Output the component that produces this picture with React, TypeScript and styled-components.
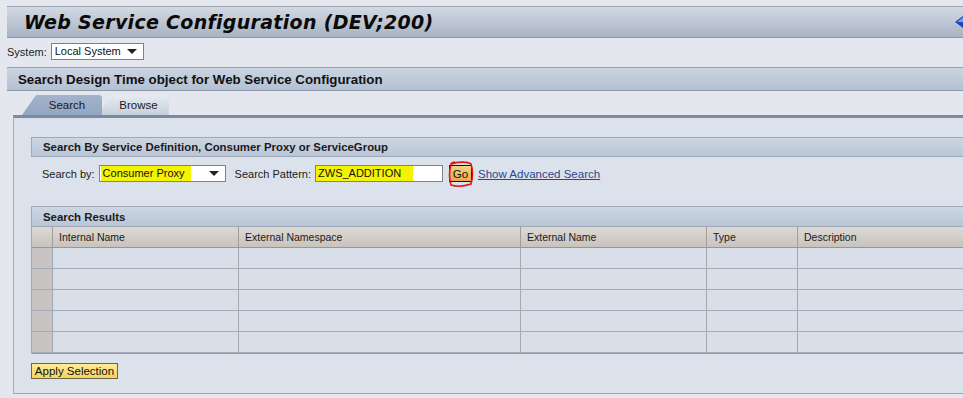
import * as React from 'react';
import styled, { createGlobalStyle } from 'styled-components';

const GlobalStyle = createGlobalStyle`
  html, body {
    margin: 0;
    padding: 0;
    background: #e4e8ee;
    overflow: hidden;
  }
  body {
    font-family: "Liberation Sans", Arial, sans-serif;
    font-size: 11px;
    color: #111;
  }
`;

const Page = styled.div`
  width: 963px;
  height: 398px;
  overflow: hidden;
  padding: 6px 0 0 7px;
  box-sizing: border-box;
`;

const TitleBar = styled.div`
  height: 32px;
  box-sizing: border-box;
  border-top: 1px solid #98a2b0;
  border-bottom: 1px solid #8f99a8;
  background: linear-gradient(#d3d9e3, #bcc5d2 55%, #a7b2c2);
  display: flex;
  align-items: center;
  justify-content: space-between;
  padding-left: 17px;
`;

const Title = styled.h1`
  margin: 0;
  font-family: "DejaVu Sans", Verdana, sans-serif;
  font-weight: bold;
  font-style: italic;
  font-size: 19px;
  letter-spacing: 0.3px;
  color: #0a0a0a;
`;

const BackArrow = styled.svg`
  width: 10px;
  height: 12px;
  margin-right: -2px;
`;

const FieldRow = styled.div<{ $indent?: number }>`
  display: flex;
  align-items: center;
  gap: 4px;
  padding-left: ${p => p.$indent ?? 0}px;
`;

const SystemRow = styled(FieldRow)`
  margin: 5px 0 7px;
  height: 17px;
`;

const Label = styled.span<{ $gapBefore?: number }>`
  font-size: 11px;
  color: #1a1a1a;
  white-space: nowrap;
  margin-left: ${p => p.$gapBefore ?? 0}px;
`;

const SelectBox = styled.div<{ $width: number }>`
  width: ${p => p.$width}px;
  height: 17px;
  box-sizing: border-box;
  background: #fff;
  border: 1px solid #7c828c;
  display: flex;
  align-items: center;
  justify-content: space-between;
  padding: 0 6px 0 1px;
  font-size: 11px;
`;

const Highlight = styled.span<{ $width?: number; $on?: boolean }>`
  display: inline-block;
  width: ${p => (p.$width ? `${p.$width}px` : 'auto')};
  background: ${p => (p.$on ? '#f4f400' : 'transparent')};
  padding-left: 2px;
  line-height: 15px;
  white-space: nowrap;
`;

const Caret = styled.span`
  width: 0;
  height: 0;
  border-left: 5px solid transparent;
  border-right: 5px solid transparent;
  border-top: 5px solid #222;
`;

const SectionHeader = styled.div`
  height: 24px;
  box-sizing: border-box;
  border-top: 1px solid #96a0ae;
  border-bottom: 1px solid #8e98a8;
  background: linear-gradient(#cbd4e0, #b4c1d3);
  display: flex;
  align-items: center;
  padding-left: 11px;
  font-size: 13.3px;
  font-weight: bold;
  color: #111;
`;

const TabStrip = styled.div`
  display: flex;
  margin: 4px 0 0 6px;
  padding-left: 9px;
  height: 20px;
`;

const Tab = styled.div<{ $active?: boolean; $width: number }>`
  width: ${p => p.$width}px;
  height: 20px;
  box-sizing: border-box;
  padding-left: 10px;
  margin-right: -4px;
  display: flex;
  align-items: center;
  justify-content: center;
  font-size: 11.5px;
  color: #1a1a1a;
  clip-path: polygon(14px 0, calc(100% - 2px) 0, 100% 2px, 100% 100%, 0 100%);
  background: ${p =>
    p.$active
      ? 'linear-gradient(#a3b3cb, #93a5c0)'
      : 'linear-gradient(#e6ebf1, #c6d0dd)'};
  z-index: ${p => (p.$active ? 2 : 1)};
`;

const Panel = styled.div`
  margin-left: 6px;
  border-top: 3px solid #7b8aa3;
  border-left: 1px solid #a4adba;
  border-bottom: 1px solid #9aa4b2;
  background: #dce2eb;
  height: 279px;
  box-sizing: border-box;
  padding: 19px 0 0 17px;
`;

const Group = styled.div`
  border-left: 1px solid #a1aab6;
`;

const GroupHeader = styled.div<{ $height: number }>`
  height: ${p => p.$height}px;
  box-sizing: border-box;
  border-top: 1px solid #a0a9b6;
  border-bottom: 1px solid #9ea8b6;
  background: linear-gradient(#cdd6e2, #b9c6d8);
  display: flex;
  align-items: center;
  padding-left: 11px;
  font-weight: bold;
  font-size: 11.4px;
  color: #1a1a1a;
`;

const SearchRow = styled(FieldRow)`
  margin: 8px 0 24px;
  height: 17px;
`;

const TextInput = styled.div`
  width: 128px;
  height: 17px;
  box-sizing: border-box;
  background: #fff;
  border: 1px solid #7c828c;
  display: flex;
  align-items: center;
  font-size: 11px;
`;

const GoWrap = styled.div`
  position: relative;
  margin-left: 2px;
`;

const GoButton = styled.button`
  width: 23px;
  height: 17px;
  padding: 0;
  box-sizing: border-box;
  border: 1px solid #111;
  background: linear-gradient(#f8d27e, #eba84a);
  font-family: "Liberation Sans", Arial, sans-serif;
  font-size: 11.5px;
  color: #111;
`;

const RedMark = styled.svg`
  position: absolute;
  left: -4px;
  top: -5px;
  width: 30px;
  height: 28px;
  pointer-events: none;
`;

const Link = styled.a`
  margin-left: 2px;
  color: #2a4790;
  text-decoration: underline;
  font-size: 11.5px;
  cursor: pointer;
`;

const Table = styled.div`
  display: grid;
  grid-template-columns: 20px 186px 282px 186px 91px 200px;
  border-bottom: 1px solid #949eab;
`;

const HeadCell = styled.div`
  height: 21px;
  box-sizing: border-box;
  background: linear-gradient(#ddd9d5, #c9c3bd);
  border-left: 1px solid #a19d99;
  border-bottom: 1px solid #9a9690;
  display: flex;
  align-items: center;
  padding-left: 6px;
  font-size: 10.5px;
  color: #1a1a1a;
  &:first-child {
    border-left: none;
  }
`;

const Cell = styled.div<{ $selector?: boolean }>`
  height: 21px;
  box-sizing: border-box;
  background: ${p => (p.$selector ? '#c7c4c3' : '#d8dfe9')};
  border-left: ${p => (p.$selector ? 'none' : '1px solid #a2a9b3')};
  border-bottom: 1px solid #a3aab5;
`;

const ApplyButton = styled.button`
  margin-top: 9px;
  width: 87px;
  height: 16px;
  padding: 0;
  box-sizing: border-box;
  border: 1px solid #6f6540;
  background: linear-gradient(#fdeb98, #f2d561);
  font-family: "Liberation Sans", Arial, sans-serif;
  font-size: 11.5px;
  color: #111;
  line-height: 13px;
`;

const columns = ['', 'Internal Name', 'External Namespace', 'External Name', 'Type', 'Description'];

export default function App() {
  return (
    <Page>
      <GlobalStyle />
      <TitleBar>
        <Title>Web Service Configuration (DEV;200)</Title>
        <BackArrow viewBox="0 0 10 12">
          <path d="M0 6 L8 0 L8 12 Z" fill="#2445b8" />
          <path d="M2 6 L8 1.5 L8 6 Z" fill="#7f9cf0" />
        </BackArrow>
      </TitleBar>

      <SystemRow>
        <Label>System:</Label>
        <SelectBox $width={93}>
          <Highlight>Local System</Highlight>
          <Caret />
        </SelectBox>
      </SystemRow>

      <SectionHeader>Search Design Time object for Web Service Configuration</SectionHeader>

      <TabStrip>
        <Tab $active $width={80}>Search</Tab>
        <Tab $width={71}>Browse</Tab>
      </TabStrip>

      <Panel>
        <Group>
          <GroupHeader $height={20}>
            Search By Service Definition, Consumer Proxy or ServiceGroup
          </GroupHeader>
        </Group>
        <SearchRow $indent={11}>
          <Label>Search by:</Label>
          <SelectBox $width={127}>
            <Highlight $on $width={88}>Consumer Proxy</Highlight>
            <Caret />
          </SelectBox>
          <Label $gapBefore={5}>Search Pattern:</Label>
          <TextInput>
            <Highlight $on $width={95}>ZWS_ADDITION</Highlight>
          </TextInput>
          <GoWrap>
            <GoButton>Go</GoButton>
            <RedMark viewBox="0 0 30 28">
              <path
                d="M6 4 C12 2 22 1 26 4 C28 9 28 18 26 24 C20 26 12 27 6 25 C4 19 4 12 6 4 Z M6 4 C6 3 8 2 10 2"
                fill="none"
                stroke="#e0141a"
                strokeWidth="1.6"
              />
            </RedMark>
          </GoWrap>
          <Link>Show Advanced Search</Link>
        </SearchRow>

        <Group>
          <GroupHeader $height={21}>Search Results</GroupHeader>
          <Table>
            {columns.map((c, i) => (
              <HeadCell key={i}>{c}</HeadCell>
            ))}
            {Array.from({ length: 5 }).map((_, r) =>
              columns.map((_c, i) => <Cell key={`${r}-${i}`} $selector={i === 0} />)
            )}
          </Table>
        </Group>
        <ApplyButton>Apply Selection</ApplyButton>
      </Panel>
    </Page>
  );
}
